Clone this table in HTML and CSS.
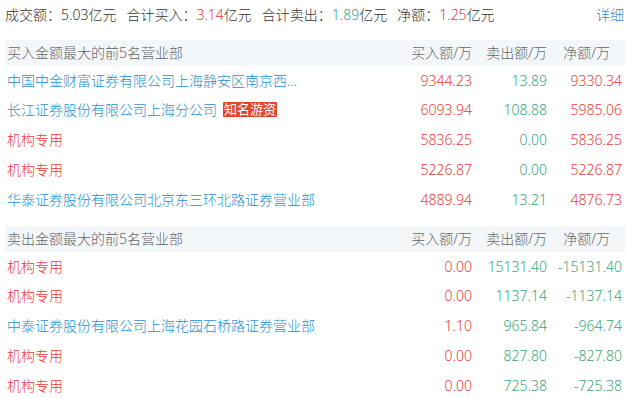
FILE: index.html
```html
<!DOCTYPE html>
<html lang="zh">
<head>
<meta charset="utf-8">
<link rel="stylesheet" href="styles.css">
</head>
<body>
<div class="page">
  <div class="summary">
    <div class="stats">
      <span class="stat">成交额：5.03亿元</span>
      <span class="stat">合计买入：<span class="red">3.14</span>亿元</span>
      <span class="stat">合计卖出：<span class="green">1.89</span>亿元</span>
      <span class="stat">净额：<span class="red">1.25</span>亿元</span>
    </div>
    <a class="detail">详细</a>
  </div>

  <div class="table">
    <div class="row head">
      <div class="name">买入金额最大的前5名营业部</div>
      <div class="num">买入额/万</div>
      <div class="num">卖出额/万</div>
      <div class="num net-h">净额/万</div>
    </div>
    <div class="row">
      <div class="name blue">中国中金财富证券有限公司上海静安区南京西...</div>
      <div class="num red">9344.23</div>
      <div class="num green">13.89</div>
      <div class="num red">9330.34</div>
    </div>
    <div class="row">
      <div class="name blue">长江证券股份有限公司上海分公司<span class="badge">知名游资</span></div>
      <div class="num red">6093.94</div>
      <div class="num green">108.88</div>
      <div class="num red">5985.06</div>
    </div>
    <div class="row">
      <div class="name red">机构专用</div>
      <div class="num red">5836.25</div>
      <div class="num green">0.00</div>
      <div class="num red">5836.25</div>
    </div>
    <div class="row">
      <div class="name red">机构专用</div>
      <div class="num red">5226.87</div>
      <div class="num green">0.00</div>
      <div class="num red">5226.87</div>
    </div>
    <div class="row">
      <div class="name blue">华泰证券股份有限公司北京东三环北路证券营业部</div>
      <div class="num red">4889.94</div>
      <div class="num green">13.21</div>
      <div class="num red">4876.73</div>
    </div>
  </div>

  <div class="table second">
    <div class="row head">
      <div class="name">卖出金额最大的前5名营业部</div>
      <div class="num">买入额/万</div>
      <div class="num">卖出额/万</div>
      <div class="num net-h">净额/万</div>
    </div>
    <div class="row">
      <div class="name red">机构专用</div>
      <div class="num red">0.00</div>
      <div class="num green">15131.40</div>
      <div class="num green">-15131.40</div>
    </div>
    <div class="row">
      <div class="name red">机构专用</div>
      <div class="num red">0.00</div>
      <div class="num green">1137.14</div>
      <div class="num green">-1137.14</div>
    </div>
    <div class="row">
      <div class="name blue">中泰证券股份有限公司上海花园石桥路证券营业部</div>
      <div class="num red">1.10</div>
      <div class="num green">965.84</div>
      <div class="num green">-964.74</div>
    </div>
    <div class="row">
      <div class="name red">机构专用</div>
      <div class="num red">0.00</div>
      <div class="num green">827.80</div>
      <div class="num green">-827.80</div>
    </div>
    <div class="row">
      <div class="name red">机构专用</div>
      <div class="num red">0.00</div>
      <div class="num green">725.38</div>
      <div class="num green">-725.38</div>
    </div>
  </div>
</div>
</body>
</html>
```
FILE: styles.css
```css
html, body {
  margin: 0;
  padding: 0;
  background: #fff;
}
body {
  font-family: "Noto Sans", "Noto Sans CJK SC", sans-serif;
  font-size: 14px;
  font-weight: 300;
  color: #333;
  width: 629px;
  height: 398px;
  overflow: hidden;
}
.page {
  padding: 5px 4px 0 5px;
}
.summary {
  display: flex;
  justify-content: space-between;
  align-items: center;
  height: 20px;
  line-height: 20px;
  margin-bottom: 15px;
}
.stats {
  display: flex;
  gap: 10px;
}
.detail {
  color: #2b8fd6;
  padding-right: 1px;
  cursor: pointer;
}
.table {
  display: flex;
  flex-direction: column;
}
.table.second {
  margin-top: 11px;
}
.row {
  display: grid;
  grid-template-columns: 1fr 75px 75px 75px;
  height: 30px;
  line-height: 30px;
  white-space: nowrap;
}
.row.head {
  height: 26px;
  line-height: 26px;
  background: #f3f7fa;
  color: #666;
}
.row.head + .row {
  height: 29px;
}
.name {
  padding-left: 2px;
  overflow: hidden;
}
.num {
  text-align: right;
  padding-right: 3px;
}
.row.head .net-h {
  padding-right: 15px;
}
.red { color: #e93b3b; }
.green { color: #3ca57a; }
.blue { color: #1d8fcf; }
.badge {
  display: inline-block;
  background: #e5452e;
  color: #fff;
  font-size: 13px;
  font-weight: 400;
  line-height: 15px;
  padding: 0 1px;
  margin-left: 6px;
  border-radius: 1px;
  vertical-align: 1px;
}
```
